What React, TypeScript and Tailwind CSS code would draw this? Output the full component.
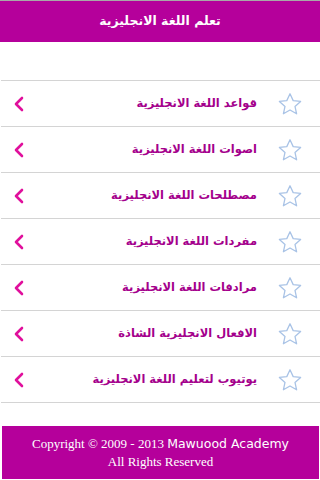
const items = [
  "قواعد اللغة الانجليزية",
  "اصوات اللغة الانجليزية",
  "مصطلحات اللغة الانجليزية",
  "مفردات اللغة الانجليزية",
  "مرادفات اللغة الانجليزية",
  "الافعال الانجليزية الشاذة",
  "يوتيوب لتعليم اللغة الانجليزية",
];

function Star() {
  return (
    <svg width="26" height="24" viewBox="0 0 26 24" fill="none">
      <path
        d="M13 1.8 L16.2 8.6 L23.6 9.4 L18 14.4 L19.6 21.8 L13 18 L6.4 21.8 L8 14.4 L2.4 9.4 L9.8 8.6 Z"
        stroke="#a9c3e6"
        strokeWidth="1.3"
        strokeLinejoin="round"
        fill="#ffffff"
      />
    </svg>
  );
}

function Chevron() {
  return (
    <svg width="12" height="16" viewBox="0 0 12 16" fill="none">
      <path d="M9 2 L3 8 L9 14" stroke="#e0109c" strokeWidth="2.6" strokeLinecap="round" strokeLinejoin="round" />
    </svg>
  );
}

export default function App() {
  return (
    <div className="w-[320px] h-[480px] bg-white border-t border-[#a8a8a8] flex flex-col overflow-hidden">
      <header
        className="h-[41px] bg-[#b5009b] flex items-center justify-center text-white font-bold text-[12.5px]"
        dir="rtl"
        style={{ fontFamily: '"DejaVu Sans", "Liberation Sans", sans-serif' }}
      >
        تعلم اللغة الانجليزية
      </header>

      <ul className="mt-[38px] ml-[1px] border-t border-[#d4d4d4]">
        {items.map((t) => (
          <li
            key={t}
            className="h-[46px] border-b border-[#d4d4d4] flex items-center justify-between pl-[12px] pr-[17px]"
          >
            <Chevron />
            <div className="flex items-center gap-[20px]">
              <span
                dir="rtl"
                className="text-[#a4008c] font-bold text-[11.5px]"
                style={{ fontFamily: '"DejaVu Sans", "Liberation Sans", sans-serif' }}
              >
                {t}
              </span>
              <Star />
            </div>
          </li>
        ))}
      </ul>

      <footer className="mt-[23px] ml-[2px] mr-[1px] h-[53px] bg-[#b5009b] flex flex-col items-center justify-center text-white text-[13px] leading-[18px] font-['Liberation_Serif',serif]">
        <div>
          Copyright © 2009 - 2013{" "}
          <span className="font-['DejaVu_Sans',sans-serif] text-[12.5px]">Mawuood Academy</span>
        </div>
        <div>All Rights Reserved</div>
      </footer>
    </div>
  );
}
